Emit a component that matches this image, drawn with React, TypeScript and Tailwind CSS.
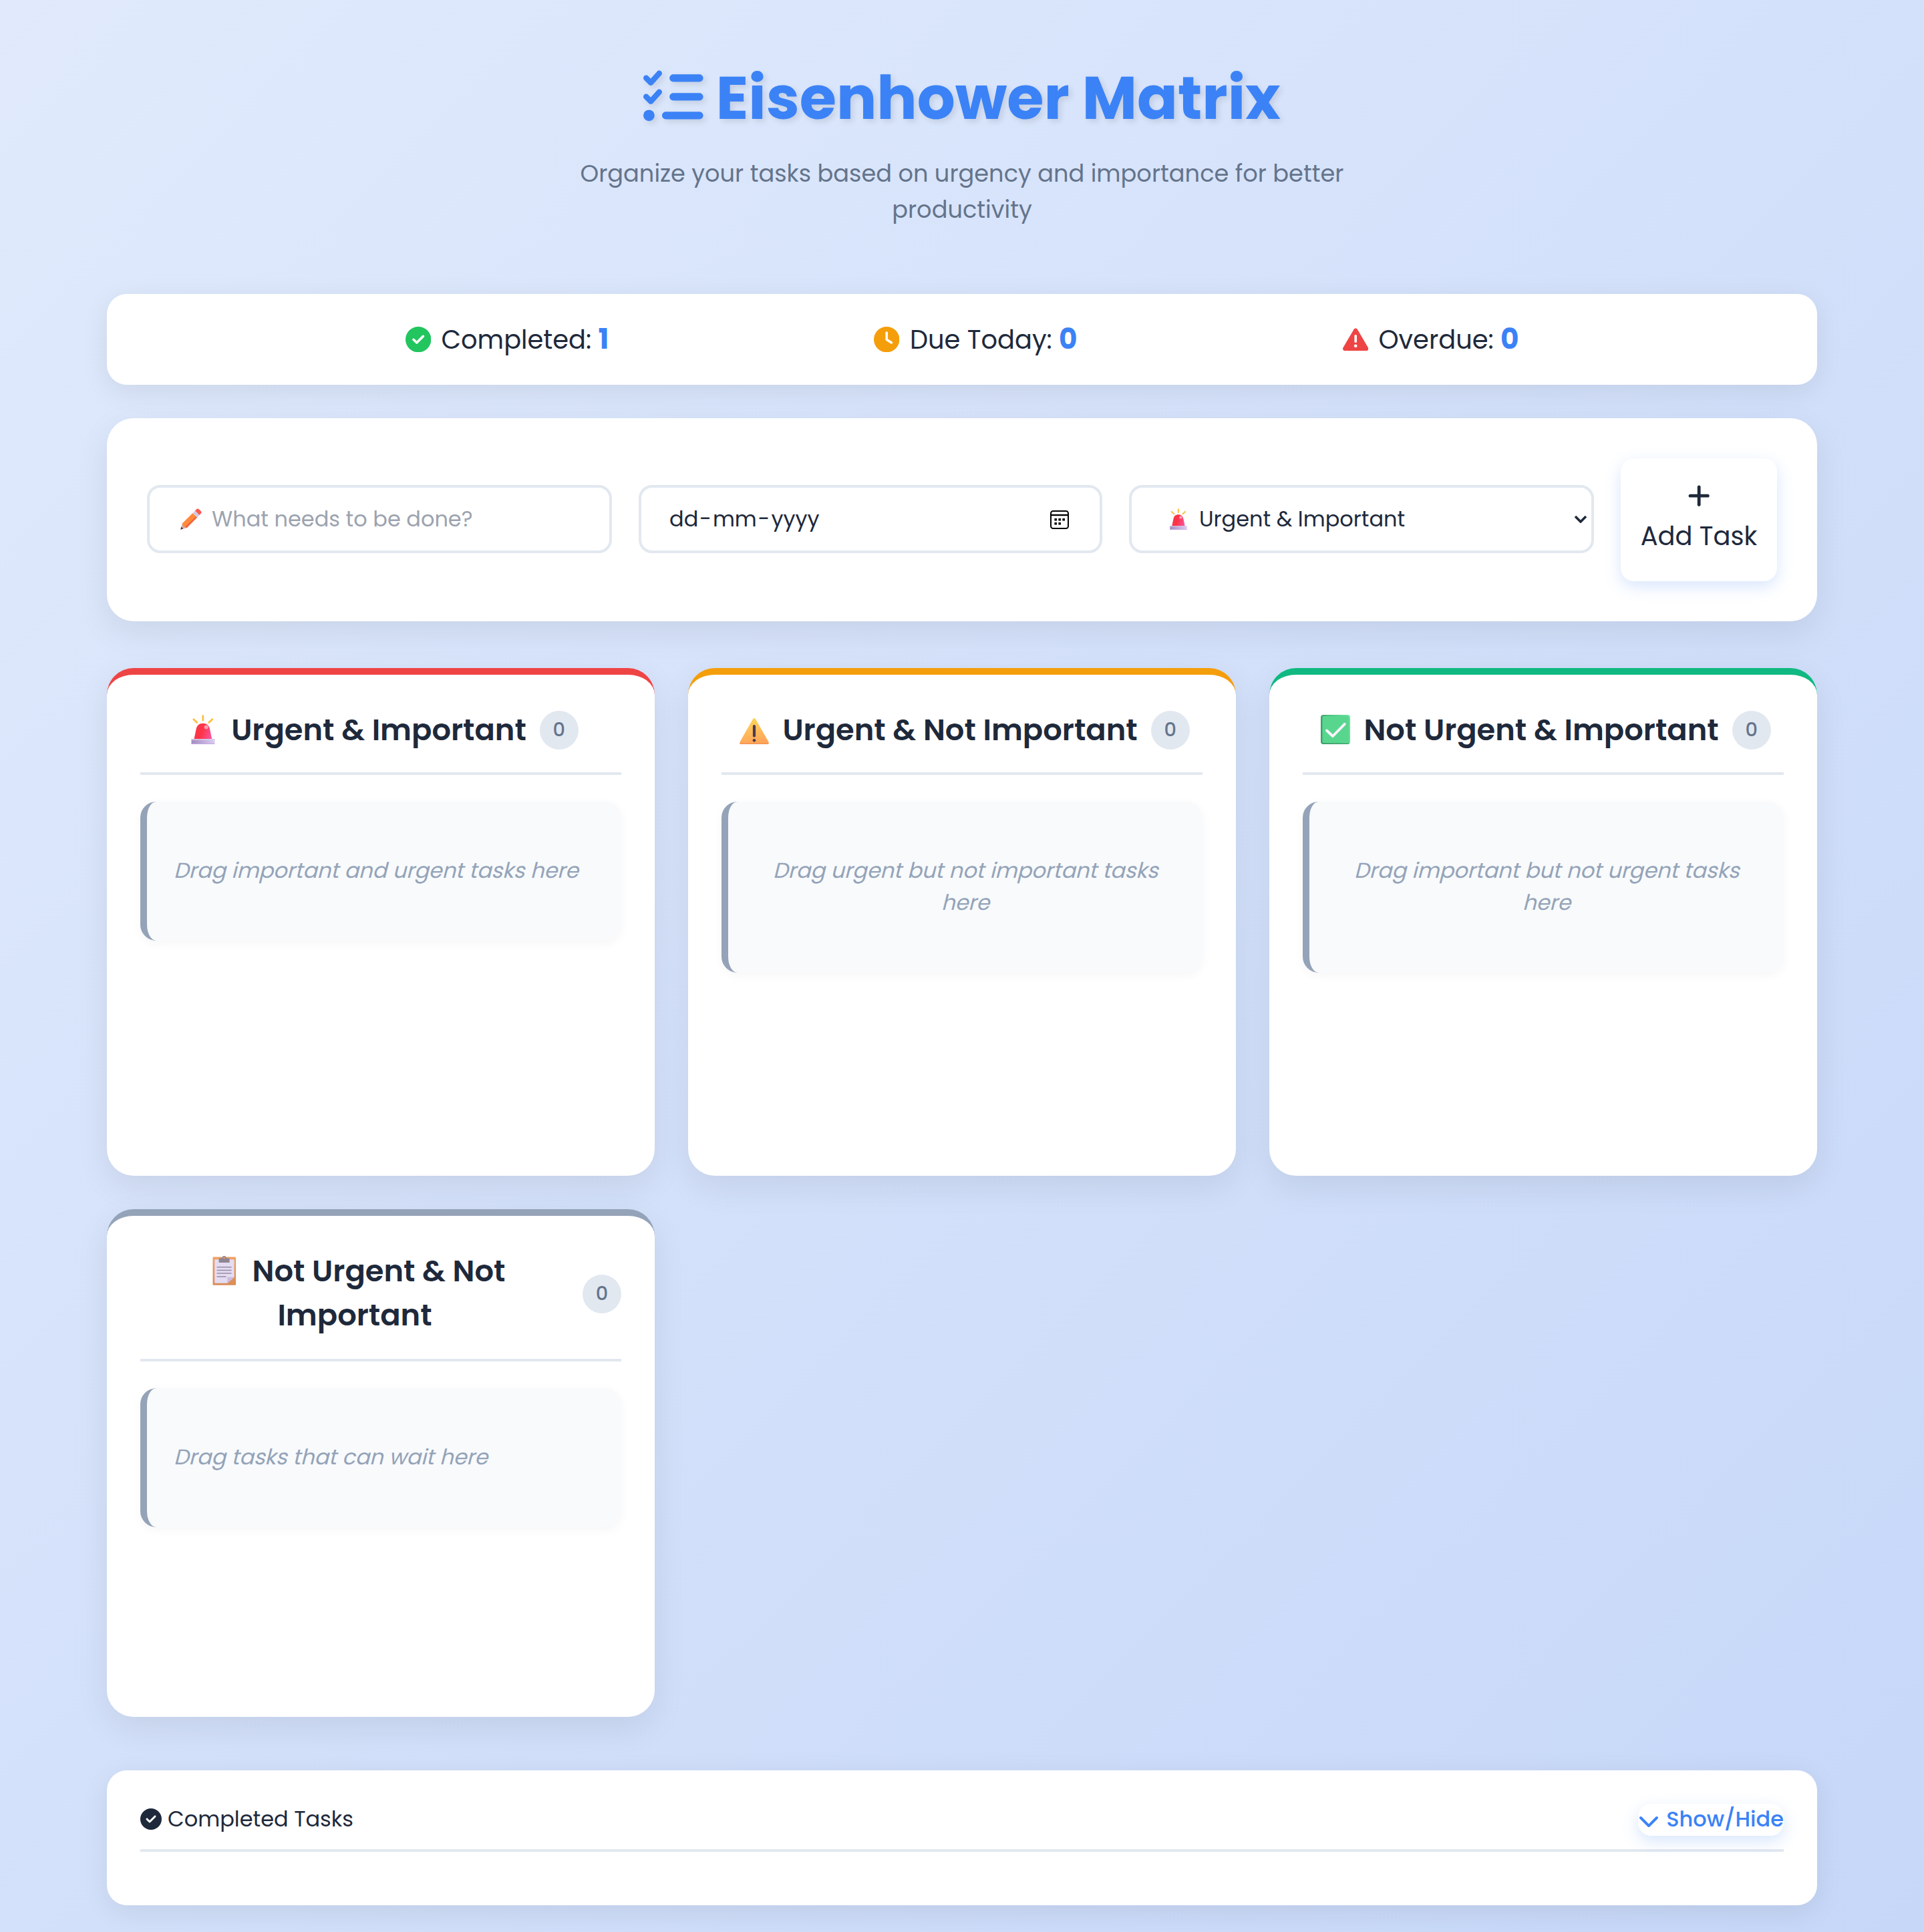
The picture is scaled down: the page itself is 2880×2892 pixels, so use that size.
import type { ReactNode } from "react";
import {
  FaChevronDown,
  FaCircleCheck,
  FaClock,
  FaListCheck,
  FaPlus,
  FaTriangleExclamation,
} from "react-icons/fa6";

function Siren({ className }: { className: string }) {
  return (
    <svg viewBox="0 0 44 44" className={className} aria-hidden="true">
      <defs>
        <linearGradient id="siren-dome" x1="0" y1="0.3" x2="1" y2="0.6">
          <stop offset="0" stopColor="#f5384a" />
          <stop offset="0.45" stopColor="#ff3346" />
          <stop offset="1" stopColor="#f8549c" />
        </linearGradient>
        <linearGradient id="siren-base" x1="0" y1="0" x2="1" y2="0">
          <stop offset="0" stopColor="#a18cbf" />
          <stop offset="1" stopColor="#dccdf0" />
        </linearGradient>
      </defs>
      <g stroke="#fbc043" strokeWidth="2.8" strokeLinecap="round">
        <path d="M21.8 1.6V8.2M7.8 6.8l5 4.6M35.8 6.8l-5 4.6" />
      </g>
      <path d="M8.4 37 11.6 21.5C12.8 15.6 16.2 12.7 21.8 12.7s9.2 2.9 10.4 8.8L35.4 37Z" fill="url(#siren-dome)" />
      <circle cx="26.6" cy="18.4" r="3" fill="#ff9fae" />
      <rect x="4.5" y="36" width="35" height="8" rx="0.8" fill="url(#siren-base)" />
      <path d="M4.5 37h35" stroke="#d9cdea" strokeWidth="1.4" />
      <path d="M4.5 43.4h35" stroke="#c9a3e6" strokeWidth="1" />
    </svg>
  );
}

function Warning({ className }: { className: string }) {
  return (
    <svg viewBox="0 0 44 44" className={className} aria-hidden="true">
      <defs>
        <linearGradient id="warn-face" x1="0" y1="0" x2="0.2" y2="1">
          <stop offset="0" stopColor="#fcd95a" />
          <stop offset="1" stopColor="#ffa659" />
        </linearGradient>
      </defs>
      <path d="M19.9 6.4c.9-1.7 3.3-1.7 4.2 0l19.5 34.4c.9 1.6 0 3.2-1.5 3.2H1.9C.4 44-.5 42.4.4 40.8Z" fill="url(#warn-face)" />
      <path d="M.8 43.2h42.4" stroke="#f29355" strokeWidth="1.4" />
      <rect x="19.9" y="15" width="4.2" height="18.6" rx="2.1" fill="#4b3a55" />
      <circle cx="22" cy="38.2" r="2.3" fill="#4b3a55" />
    </svg>
  );
}

function CheckBox({ className }: { className: string }) {
  return (
    <svg viewBox="0 0 44 44" className={className} aria-hidden="true">
      <defs>
        <linearGradient id="check-edge" x1="0" y1="0.2" x2="1" y2="0">
          <stop offset="0" stopColor="#3f9f6c" />
          <stop offset="0.3" stopColor="#4fbf80" />
          <stop offset="1" stopColor="#6ae8a0" />
        </linearGradient>
      </defs>
      <rect width="44" height="44" rx="4" fill="url(#check-edge)" />
      <path d="M1 42.4q1 1.6 3 1.6h36q2 0 3-1.6Z" fill="#3fa36c" />
      <rect x="2.4" y="2" width="39.6" height="40" rx="2.5" fill="#59d68e" />
      <path d="M9 23.5 18 32 35.8 13.8" fill="none" stroke="#fdf4ff" strokeWidth="3.8" strokeLinecap="round" strokeLinejoin="round" />
    </svg>
  );
}

function Clipboard({ className }: { className: string }) {
  return (
    <svg viewBox="0 0 44 44" className={className} aria-hidden="true">
      <defs>
        <linearGradient id="clip-board" x1="0" y1="0" x2="0" y2="1">
          <stop offset="0" stopColor="#efa266" />
          <stop offset="1" stopColor="#d98d58" />
        </linearGradient>
      </defs>
      <rect x="4.5" y="1.4" width="34.6" height="42.4" rx="1.4" fill="url(#clip-board)" />
      <path d="M8.2 5.2h27.4q1 0 1 1v25.6L26.4 40.8H8.2q-1 0-1-1V6.2q0-1 1-1Z" fill="#e4dcf1" />
      <path d="M26.4 40.8V33q0-1.2 1.2-1.2h9Z" fill="#cbbbe0" />
      <path d="M13.6 10V4.8q0-1.6 1.6-1.6h3.2q.4-3.2 3.2-3.2t3.2 3.2H28q1.6 0 1.6 1.6V10Z" fill="#8f8492" />
      <circle cx="21.6" cy="3" r="1.2" fill="#efa266" />
      <path d="M10.6 16.8h22M10.6 21.4h22M10.6 26.1h22M10.6 31h14" stroke="#988ca6" strokeWidth="1.5" />
    </svg>
  );
}

function Pencil({ className }: { className: string }) {
  return (
    <svg viewBox="0 0 32 32" className={className} aria-hidden="true">
      <path d="M0.4 31.6 3 22.4 9.6 29Z" fill="#d9a9a0" />
      <path d="M0.2 31.8 1.4 27.6 4.4 30.6Z" fill="#4a3350" />
      <path d="M2.8 22.6 18.4 7 25 13.6 9.4 29.2Q6 28.6 5.6 26.4 3.4 26 2.8 22.6Z" fill="#ff8a3c" />
      <path d="M7.6 27.2 23.4 12l1.6 1.6L9.4 29.2Z" fill="#f2603e" />
      <path d="M18.4 7 22 3.4 28.6 10 25 13.6Z" fill="#d5c8e4" />
      <path d="M22 3.4 24.2 1.2Q26 -.4 28 1.4L30.6 4Q32.4 6 30.8 7.8L28.6 10Z" fill="#fb5c50" />
    </svg>
  );
}

function CalendarIcon() {
  return (
    <svg viewBox="0 0 28 28" className="mt-[2px] h-[28px] w-[28px]" aria-hidden="true">
      <rect x="1" y="1" width="26" height="26" rx="3.5" fill="none" stroke="#000" strokeWidth="2" />
      <path d="M1 7h26" stroke="#000" strokeWidth="2.4" />
      <path d="M6.4 12h3.6v3.6H6.4zM12.4 12H16v3.6h-3.6zM18.4 12H22v3.6h-3.6zM6.4 18h3.6v3.6H6.4zM12.4 18H16v3.6h-3.6z" fill="#000" />
    </svg>
  );
}

function Stat({ icon, label, value }: { icon: ReactNode; label: string; value: string }) {
  return (
    <div className="flex w-[701.5px] items-center gap-[15.5px] text-[38.4px] leading-[60px]">
      {icon}
      <span>
        {label} <strong className="text-[42.24px] font-bold text-[#3b82f6]">{value}</strong>
      </span>
    </div>
  );
}

/* Slants each line around its own baseline. */
function SlantedLine({ children }: { children: ReactNode }) {
  return <span className="inline-block origin-[0_35px] skew-x-[-14deg]">{children}</span>;
}

type QuadrantProps = {
  accent: string;
  headerHeight: string;
  titleOffset: string;
  icon: ReactNode;
  title: string;
  hint: string[];
};

function Quadrant({ accent, headerHeight, titleOffset, icon, title, hint }: QuadrantProps) {
  return (
    <section className={`h-[760px] rounded-[40px] border-t-[10px] bg-white px-[50px] pt-[40px] shadow-[0_16px_50px_rgba(0,0,0,0.08)] ${accent}`}>
      <header className={`flex items-center justify-center gap-[20px] border-b-4 border-[#e2e8f0] pt-[10px] pb-[30px] ${headerHeight}`}>
        <h2 className={`text-center text-[44.8px] leading-[66px] font-semibold ${titleOffset}`}>
          <span className="mr-[20px] ml-[8px] inline-block h-[44px] w-[44px] align-[-6px]">{icon}</span>
          {title}
        </h2>
        <span className="flex h-[58px] w-[58px] shrink-0 items-center justify-center rounded-full bg-[#e2e8f0] pb-[1px] text-[28.8px] leading-none font-medium text-[#64748b]">
          0
        </span>
      </header>
      <div className="mt-[40px] flex rounded-[24px] border-l-[10px] border-[#94a3b8] bg-[#f8fafc] px-[40px] pt-[79px] pb-[81px] shadow-[0_4px_16px_rgba(0,0,0,0.04)]">
        <p className="text-center text-[32px] leading-[48px] text-[#94a3b8]">
          {hint.map((line) => (
            <span key={line}>
              <SlantedLine>{line}</SlantedLine>{" "}
            </span>
          ))}
        </p>
      </div>
    </section>
  );
}

const field = "mb-[2px] flex h-[102px] items-center rounded-[20px] border-4 border-[#e2e8f0] text-[32px]";

export default function App() {
  return (
    <div className="min-h-[2892px] w-full bg-[linear-gradient(135deg,#e0eafc_0%,#c6d7f8_100%)] px-[160px] pt-[79px] pb-[40px] font-[Poppins,Inter,sans-serif] text-[#1e293b]">
      <header className="flex flex-col items-center text-center">
        <h1 className="flex h-[135px] items-center gap-[19px] text-[89.6px] leading-[135px] font-bold text-[#3b82f6] [text-shadow:4px_4px_8px_rgba(0,0,0,0.1)]">
          <FaListCheck className="mt-[-4px] h-[89.6px] w-[89.6px] drop-shadow-[4px_4px_4px_rgba(0,0,0,0.1)]" />
          Eisenhower Matrix
        </h1>
        <p className="mt-[19px] w-[1200px] text-[35.2px] leading-[54px] text-[#64748b]">
          Organize your tasks based on urgency and importance for better productivity
        </p>
      </header>

      <section className="mt-[99px] flex h-[136px] items-center rounded-[30px] bg-white pl-[446.5px] shadow-[0_10px_40px_rgba(0,0,0,0.08)]">
        <Stat icon={<FaCircleCheck className="h-[38.4px] w-[38.4px] text-[#22c55e]" />} label="Completed:" value="1" />
        <Stat icon={<FaClock className="h-[38.4px] w-[38.4px] text-[#f59e0b]" />} label="Due Today:" value="0" />
        <Stat icon={<FaTriangleExclamation className="h-[38.4px] w-[38.4px] text-[#ef4444]" />} label="Overdue:" value="0" />
      </section>

      <section className="mt-[50px] grid h-[304px] grid-cols-[696px_694px_696px_234px] items-center gap-[40px] rounded-[40px] bg-white px-[60px] shadow-[0_16px_50px_rgba(0,0,0,0.08)]">
        <div className={`${field} pl-[46px] text-[#9ca3af]`}>
          <Pencil className="mr-[15px] h-[32px] w-[32px]" />
          What needs to be done?
        </div>
        <div className={`${field} justify-between pr-[46px] pl-[42px]`}>
          <div className="flex gap-[2px]">
            <span>dd</span>
            <span>-</span>
            <span>mm</span>
            <span>-</span>
            <span>yyyy</span>
          </div>
          <CalendarIcon />
        </div>
        <div className={`${field} pr-[6px] pl-[54px]`}>
          <Siren className="mr-[15px] h-[32px] w-[32px]" />
          Urgent &amp; Important
          <svg viewBox="0 0 20 12" className="ml-auto h-[12px] w-[20px]" aria-hidden="true">
            <path d="M2 2l8 8 8-8" fill="none" stroke="#1e293b" strokeWidth="3.6" />
          </svg>
        </div>
        <button className="flex h-[184px] flex-col items-center rounded-[20px] bg-white pt-[37px] shadow-[0_8px_24px_rgba(59,130,246,0.2)]">
          <FaPlus className="h-[38.4px] w-[38.4px]" />
          <span className="mt-[12px] text-[38.4px] leading-[60px]">Add Task</span>
        </button>
      </section>

      <main className="mt-[70px] grid grid-cols-3 gap-[50px]">
        <Quadrant
          accent="border-[#ef4444]"
          headerHeight="h-[110px]"
          titleOffset="mb-0"
          icon={<Siren className="h-[44px] w-[44px]" />}
          title="Urgent & Important"
          hint={["Drag important and urgent tasks here"]}
        />
        <Quadrant
          accent="border-[#f59e0b]"
          headerHeight="h-[110px]"
          titleOffset="mb-0"
          icon={<Warning className="h-[44px] w-[44px]" />}
          title="Urgent & Not Important"
          hint={["Drag urgent but not important tasks", "here"]}
        />
        <Quadrant
          accent="border-[#10b981]"
          headerHeight="h-[110px]"
          titleOffset="mb-0"
          icon={<CheckBox className="h-[44px] w-[44px]" />}
          title="Not Urgent & Important"
          hint={["Drag important but not urgent tasks", "here"]}
        />
        <Quadrant
          accent="border-[#94a3b8]"
          headerHeight="h-[178px]"
          titleOffset="mb-[2px]"
          icon={<Clipboard className="h-[44px] w-[44px]" />}
          title="Not Urgent & Not Important"
          hint={["Drag tasks that can wait here"]}
        />
      </main>

      <section className="mt-[80px] h-[202px] rounded-[30px] bg-white px-[50px] pt-[50px] shadow-[0_10px_40px_rgba(0,0,0,0.08)]">
        <div className="flex h-[72px] items-start justify-between border-b-4 border-[#e2e8f0] text-[32px] leading-[48px]">
          <h3 className="flex h-[48px] items-center gap-[9px] pb-[2px]">
            <FaCircleCheck className="h-[32px] w-[32px]" />
            Completed Tasks
          </h3>
          <button className="flex h-[48px] items-center gap-[10px] rounded-[20px] pb-[2px] font-medium text-[#3b82f6] shadow-[0_8px_24px_rgba(59,130,246,0.2)]">
            <FaChevronDown className="mt-[4px] h-[32px] w-[32px]" />
            Show/Hide
          </button>
        </div>
      </section>
    </div>
  );
}
